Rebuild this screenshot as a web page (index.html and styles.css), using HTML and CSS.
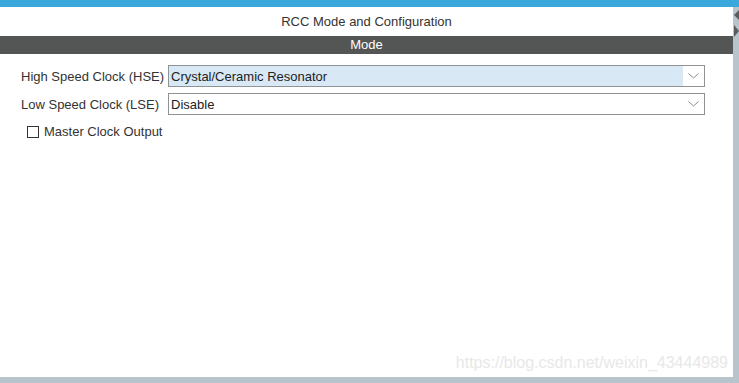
FILE: index.html
```html
<!DOCTYPE html>
<html>
<head>
<meta charset="utf-8">
<link rel="stylesheet" href="styles.css">
</head>
<body>
<div class="app">
  <div class="topbar"></div>
  <div class="middle">
    <div class="panel">
      <div class="title">RCC Mode and Configuration</div>
      <div class="modebar">Mode</div>
      <div class="form">
        <div class="grid">
          <label class="lbl">High Speed Clock (HSE)</label>
          <div class="select active">
            <span class="val">Crystal/Ceramic Resonator</span>
            <span class="arrow"><svg width="11" height="6" viewBox="0 0 11 6"><path d="M0.5 0.5 L5.5 5 L10.5 0.5" fill="none" stroke="#8a8a8a" stroke-width="1"/></svg></span>
          </div>
          <label class="lbl">Low Speed Clock (LSE)</label>
          <div class="select">
            <span class="val">Disable</span>
            <span class="arrow"><svg width="11" height="6" viewBox="0 0 11 6"><path d="M0.5 0.5 L5.5 5 L10.5 0.5" fill="none" stroke="#8a8a8a" stroke-width="1"/></svg></span>
          </div>
        </div>
        <div class="check">
          <span class="box"></span>
          <span class="ctext">Master Clock Output</span>
        </div>
      </div>
      <div class="watermark">https://blog.csdn.net/weixin_43444989</div>
    </div>
    <div class="sidebar">
      <svg class="arr" width="6" height="32" viewBox="0 0 6 32">
        <path d="M6 2 L1 7 L6 12 Z" fill="#5a5d5f"/>
        <path d="M1 17 L6 23 L1 29 Z" fill="#5a5d5f"/>
      </svg>
    </div>
  </div>
  <div class="bottombar"></div>
</div>
</body>
</html>
```
FILE: styles.css
```css
html, body {
  margin: 0;
  padding: 0;
  width: 739px;
  height: 383px;
  overflow: hidden;
  background: #ffffff;
  font-family: "Liberation Sans", Arial, sans-serif;
}
.app {
  display: flex;
  flex-direction: column;
  width: 739px;
  height: 383px;
}
.topbar {
  height: 7px;
  background: #3aa8dc;
  flex: none;
}
.middle {
  flex: 1;
  display: flex;
  min-height: 0;
}
.panel {
  flex: 1;
  display: flex;
  flex-direction: column;
  background: #ffffff;
  position: relative;
}
.sidebar {
  width: 6px;
  flex: none;
  background: #b8c4cc;
}
.arr {
  display: block;
  margin-top: 1px;
}
.bottombar {
  height: 6px;
  flex: none;
  background: #b8c4cc;
}
.title {
  height: 29px;
  line-height: 29px;
  text-align: center;
  font-size: 13px;
  color: #333333;
}
.modebar {
  height: 18px;
  line-height: 18px;
  background: #545655;
  color: #ffffff;
  text-align: center;
  font-size: 13px;
}
.form {
  padding: 11px 28px 0 21px;
}
.grid {
  display: grid;
  grid-template-columns: auto 1fr;
  column-gap: 4px;
  row-gap: 6px;
  align-items: center;
}
.lbl {
  font-size: 13px;
  color: #333333;
  white-space: nowrap;
}
.select {
  height: 20px;
  border: 1px solid #8e9396;
  display: flex;
  align-items: center;
  background: #ffffff;
}
.select .val {
  flex: 1;
  height: 100%;
  display: flex;
  align-items: center;
  padding-left: 2px;
  font-size: 13px;
  color: #222222;
}
.select.active .val {
  background: #d9e8f5;
}
.arrow {
  width: 21px;
  height: 100%;
  display: flex;
  align-items: center;
  justify-content: center;
  flex: none;
}
.check {
  display: flex;
  align-items: center;
  margin-top: 9px;
  padding-left: 6px;
}
.box {
  width: 10px;
  height: 10px;
  border: 1px solid #333333;
  background: #ffffff;
  margin-right: 5px;
}
.ctext {
  font-size: 13px;
  color: #333333;
}
.watermark {
  position: absolute;
  right: 5px;
  bottom: 5px;
  font-size: 16px;
  color: #e8e8e8;
}
```
